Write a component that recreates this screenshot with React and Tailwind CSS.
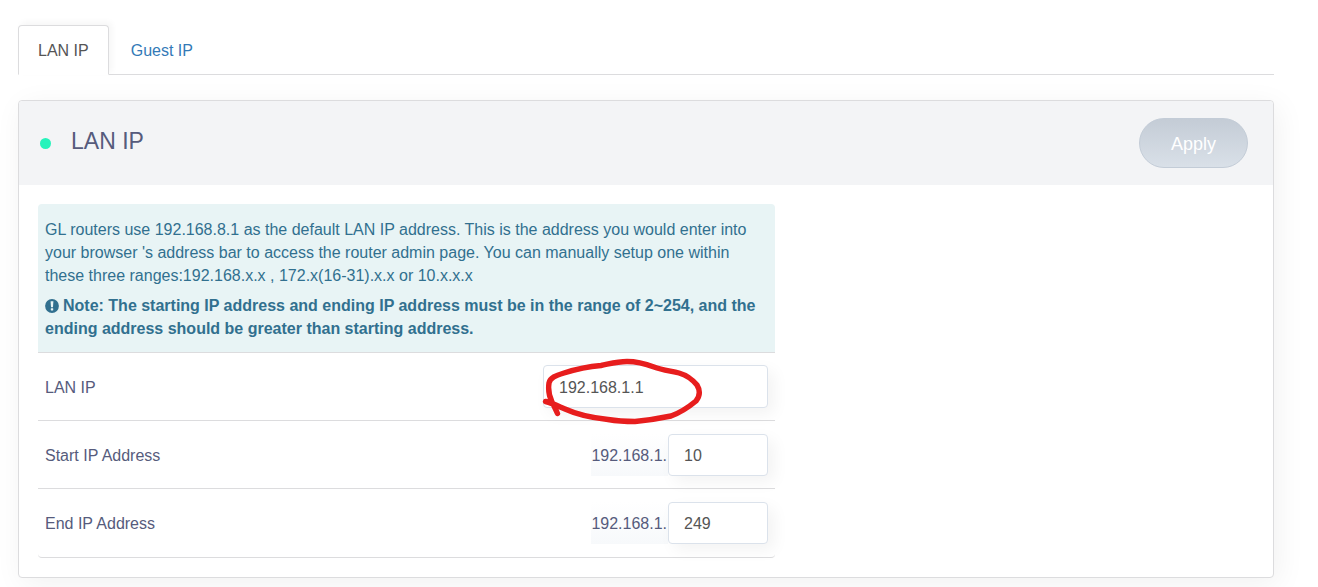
import { useState } from "react";

function Tabs() {
  return (
    <nav className="flex gap-0.5 border-b border-[#dcdcde] leading-[22px]" aria-label="Network">
      <a
        href="#lan"
        aria-current="page"
        className="-mb-px rounded-t border border-[#dcdcde] border-b-white bg-white px-[19px] pt-3.5 pb-3 text-[#555] shadow-[3px_-3px_6px_rgba(0,0,0,0.04)]"
      >
        LAN IP
      </a>
      <a href="#guest" className="px-5 pt-[15px] pb-3 text-[#337ab7]">
        Guest IP
      </a>
    </nav>
  );
}

function NoteIcon() {
  return (
    <svg viewBox="0 0 14 14" className="mr-1 inline-block size-3.5 align-[-2px]" aria-hidden="true">
      <circle cx="7" cy="7" r="6.9" fill="#31708f" />
      <path d="M5.6 2.2h2.8L8 8.3H6z" fill="#e8f4f5" />
      <rect x="5.8" y="9.2" width="2.4" height="2.2" rx="0.3" fill="#e8f4f5" />
    </svg>
  );
}

const inputClass =
  "rounded border border-[#dbe2eb] bg-white px-[15px] pt-0.5 text-[#555] shadow-[6px_6px_16px_rgba(0,0,0,0.05)] outline-none";

function HostRow({ id, label, initial, last }) {
  const [value, setValue] = useState(initial);
  return (
    <div
      className={
        last
          ? "flex h-[69px] items-center justify-between rounded-b border-b border-[#dcdcde] px-[7px]"
          : "flex h-[68px] items-center justify-between border-b border-[#dcdcde] px-[7px]"
      }
    >
      <label htmlFor={id} className="pt-0.5">{label}</label>
      <div className="flex items-center">
        <span className="bg-linear-to-b from-white to-[#f7f9fb] pt-0.5 pr-px leading-10">192.168.1.</span>
        <input id={id} className={`${inputClass} h-[42px] w-[100px]`} value={value} onChange={(e) => setValue(e.target.value)} />
      </div>
    </div>
  );
}

export default function App() {
  const [ip, setIp] = useState("192.168.1.1");
  return (
    <main className="bg-white pt-[25px] pr-11 pb-[9px] pl-[18px] font-['Liberation_Sans',Arial,sans-serif] text-base text-[#565b7c]">
      <Tabs />
      <section className="mt-[25px] rounded border border-[#dcdcde] bg-white shadow-[4px_6px_30px_rgba(0,0,0,0.06)]">
        <header className="flex h-[84px] items-center justify-between rounded-t bg-[#f3f4f6] pr-[25px] pl-[21px]">
          <div className="flex items-center gap-5">
            <span className="size-[11px] rounded-full bg-[#25f3bb]" />
            <h1 className="pb-1 text-[23px] leading-7">LAN IP</h1>
          </div>
          <button
            type="button"
            className="h-[50px] rounded-full border border-[#c3ccd7] bg-linear-to-b from-[#c4ccd6] to-[#d9e0e8] px-[31px] pt-0.5 text-lg text-white"
          >
            Apply
          </button>
        </header>
        <div className="p-[19px]">
          <form className="w-[737px] max-w-full" onSubmit={(e) => e.preventDefault()}>
            <div className="rounded-t border-b border-[#dcdcde] bg-[#e8f4f5] px-[7px] pt-3.5 pb-3 leading-[23px] text-[#31708f]">
              <p>
                GL routers use 192.168.8.1 as the default LAN IP address. This is the address you would enter into your
                browser 's address bar to access the router admin page. You can manually setup one within these three
                ranges:192.168.x.x , 172.x(16-31).x.x or 10.x.x.x
              </p>
              <p className="mt-[7px] font-bold">
                <NoteIcon />
                Note: The starting IP address and ending IP address must be in the range of 2~254, and the ending
                address should be greater than starting address.
              </p>
            </div>
            <div className="flex h-[68px] items-center justify-between border-b border-[#dcdcde] px-[7px]">
              <label htmlFor="lan-ip" className="pt-0.5">LAN IP</label>
              <div className="relative">
                <input id="lan-ip" className={`${inputClass} block h-[43px] w-[225px]`} value={ip} onChange={(e) => setIp(e.target.value)} />
                <svg
                  viewBox="540 355 165 75"
                  className="pointer-events-none absolute -top-2.5 -left-[3px] h-[75px] w-[165px] max-w-none"
                  fill="none"
                  stroke="#e71d1d"
                  strokeWidth="5.4"
                  strokeLinecap="round"
                  strokeLinejoin="round"
                  aria-hidden="true"
                >
                  <path d="M545.500 401.500 C552 403 558 406 565 409 C578 415 594 418 608 419.500 C617 421 627 421.500 635 421.500 C646 420.500 659 418.500 671 416 C682 412 690 406 696 401 C700 396 700 390 697 385 C692 379 686 375 679 373 C671 371 662 370 654 367 C646 364 637 361.500 627 361.500 C617 361.500 609 364 601 365.500 C589 366.500 575 369.500 564 373 C556 375.500 550 377.500 549 383 C548 390 549 396 552 402 C554 406 556 410 557.500 413.500" />
                </svg>
              </div>
            </div>
            <HostRow id="start-ip" label="Start IP Address" initial="10" />
            <HostRow id="end-ip" label="End IP Address" initial="249" last />
          </form>
        </div>
      </section>
    </main>
  );
}
